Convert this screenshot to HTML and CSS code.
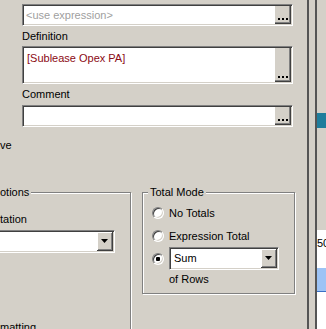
FILE: index.html
```html
<!DOCTYPE html>
<html>
  <head>
    <meta charset="UTF-8">
    <title>Expression Properties</title>
    <link rel="stylesheet" href="styles.css">
  </head>
  <body>
    <div class="window">
      <!-- Dialog pane -->
      <div class="pane">
        <div class="fields">
          <div class="edit">
            <span class="edit-text placeholder">&lt;use expression&gt;</span>
            <span class="more"><svg width="10" height="2" viewBox="0 0 10 2"><rect x="0" width="2" height="2"/><rect x="4" width="2" height="2"/><rect x="8" width="2" height="2"/></svg></span>
          </div>
          <div class="label">Definition</div>
          <div class="edit edit-tall">
            <span class="edit-text formula">[Sublease Opex PA]</span>
            <span class="more"><svg width="10" height="2" viewBox="0 0 10 2"><rect x="0" width="2" height="2"/><rect x="4" width="2" height="2"/><rect x="8" width="2" height="2"/></svg></span>
          </div>
          <div class="label label-comment">Comment</div>
          <div class="edit">
            <span class="edit-text"></span>
            <span class="more"><svg width="10" height="2" viewBox="0 0 10 2"><rect x="0" width="2" height="2"/><rect x="4" width="2" height="2"/><rect x="8" width="2" height="2"/></svg></span>
          </div>
        </div>

        <div class="check">ve</div>

        <div class="groups">
          <fieldset class="group group-options">
            <legend>otions</legend>
            <div class="group-label">tation</div>
            <div class="combo combo-wide">
              <span class="combo-text"></span>
              <span class="drop"><svg width="7" height="4" viewBox="0 0 7 4"><path d="M0 0h7L3.5 4z"/></svg></span>
            </div>
            <div class="group-label label-format">matting</div>
          </fieldset>

          <fieldset class="group group-total">
            <legend>Total Mode</legend>
            <div class="radio-row"><span class="radio"></span>No Totals</div>
            <div class="radio-row row-expr"><span class="radio"></span>Expression Total</div>
            <div class="radio-row row-sum">
              <span class="radio checked"></span>
              <div class="combo combo-sum">
                <span class="combo-text">Sum</span>
                <span class="drop"><svg width="7" height="4" viewBox="0 0 7 4"><path d="M0 0h7L3.5 4z"/></svg></span>
              </div>
            </div>
            <div class="of-rows">of Rows</div>
          </fieldset>
        </div>
      </div>

      <!-- Splitter and the window behind -->
      <div class="divider"></div>
      <div class="peek">
        <div class="peek-tab"></div>
        <div class="peek-list">
          <div class="peek-cell">50</div>
          <div class="peek-row"></div>
        </div>
      </div>
    </div>
  </body>
</html>
```

FILE: styles.css
```css
body {
  margin: 0;
  background-color: #d4d0c8;
  font-family: "Liberation Sans", Arial, sans-serif;
  font-size: 11px;
  line-height: 13px;
  color: #000;
}
.window {
  display: flex;
  width: 326px;
  height: 329px;
  overflow: hidden;
}
.pane {
  flex: none;
  width: 307px;
  overflow: hidden;
}

/* Sunken edit boxes */
.fields {
  margin-left: 22px;
  width: 271px;
  padding-top: 4px;
}
.edit {
  display: flex;
  height: 22px;
  box-sizing: border-box;
  padding: 1px;
  background-color: #fff;
  border: 1px solid;
  border-color: #808080 #fff #fff #808080;
  box-shadow: inset 1px 1px 0 #404040, inset -1px -1px 0 #d4d0c8;
}
.edit-tall {
  height: 38px;
}
.edit-text {
  flex: 1;
  align-self: center;
  padding-left: 2px;
  white-space: nowrap;
}
.edit-tall .edit-text {
  align-self: flex-start;
  padding: 4px 0 0 3px;
}
.placeholder {
  color: #a0a0a0;
}
.formula {
  color: #8b0a14;
}
.more {
  flex: none;
  width: 16px;
  box-sizing: border-box;
  display: flex;
  align-items: flex-end;
  justify-content: center;
  padding-bottom: 3px;
  background-color: #d4d0c8;
  border-right: 1px solid #404040;
  border-bottom: 1px solid #404040;
  box-shadow: inset -1px -1px 0 #808080;
}
.label {
  margin: 4px 0 3px;
}
.label-comment {
  margin: 4px 0 4px;
}
.check {
  margin-top: 12px;
}

/* Group boxes */
.groups {
  display: flex;
  align-items: flex-start;
  gap: 11px;
  margin-top: 34px;
}
.group {
  margin: 0;
  padding: 0;
  min-width: 0;
  border: 1px solid #808080;
  box-shadow: inset 1px 1px 0 #fff, 1px 1px 0 #fff;
}
.group legend {
  margin-left: 5px;
  padding: 0 2px;
  background-color: #d4d0c8;
}
.group-options {
  flex: none;
  width: 137px;
  height: 180px;
  margin-left: -8px;
}
.group-label {
  margin: 14px 0 4px 7px;
}
.label-format {
  margin-top: 68px;
}
.group-total {
  flex: none;
  width: 153px;
  box-sizing: border-box;
  padding-bottom: 7px;
}

/* Combo boxes */
.combo {
  display: flex;
  height: 23px;
  box-sizing: border-box;
  padding: 1px;
  background-color: #fff;
  border: 1px solid;
  border-color: #808080 #fff #fff #808080;
  box-shadow: inset 1px 1px 0 #404040, inset -1px -1px 0 #d4d0c8;
}
.combo-wide {
  width: 122px;
}
.combo-sum {
  width: 110px;
}
.combo-text {
  flex: 1;
  align-self: center;
  padding-left: 3px;
}
.drop {
  flex: none;
  width: 16px;
  box-sizing: border-box;
  display: flex;
  align-items: center;
  justify-content: center;
  background-color: #d4d0c8;
  border-right: 1px solid #404040;
  border-bottom: 1px solid #404040;
  box-shadow: inset 1px 1px 0 #fff, inset -1px -1px 0 #808080;
}

/* Radio buttons */
.radio-row {
  display: flex;
  align-items: center;
  height: 14px;
  margin: 7px 0 0 9px;
}
.row-expr {
  margin-top: 9px;
}
.row-sum {
  height: 23px;
  margin-top: 4px;
}
.radio {
  flex: none;
  width: 12px;
  height: 12px;
  box-sizing: border-box;
  margin-right: 5px;
  border-radius: 50%;
  background-color: #fff;
  border: 1px solid;
  border-color: #808080 #fff #fff #808080;
  box-shadow: inset 1px 1px 0 #404040, inset -1px -1px 0 #d4d0c8;
}
.radio.checked {
  background: radial-gradient(circle, #000 2px, #fff 2.5px);
}
.of-rows {
  margin: 3px 0 0 26px;
}

/* Splitter and window behind */
.divider {
  flex: none;
  width: 6px;
  border-left: 2px solid #555;
  border-right: 2px solid #555;
}
.peek {
  flex: 1;
  display: flex;
  flex-direction: column;
}
.peek-tab {
  height: 15px;
  margin-top: 113px;
  background-color: #1f7d9c;
}
.peek-list {
  flex: 1;
  margin-top: 102px;
  background-color: #fff;
}
.peek-cell {
  padding-top: 7px;
  white-space: nowrap;
}
.peek-row {
  height: 23px;
  margin-top: 18px;
  background-color: #9cc3f5;
  border-bottom: 1px solid #3a6fc4;
}
```
